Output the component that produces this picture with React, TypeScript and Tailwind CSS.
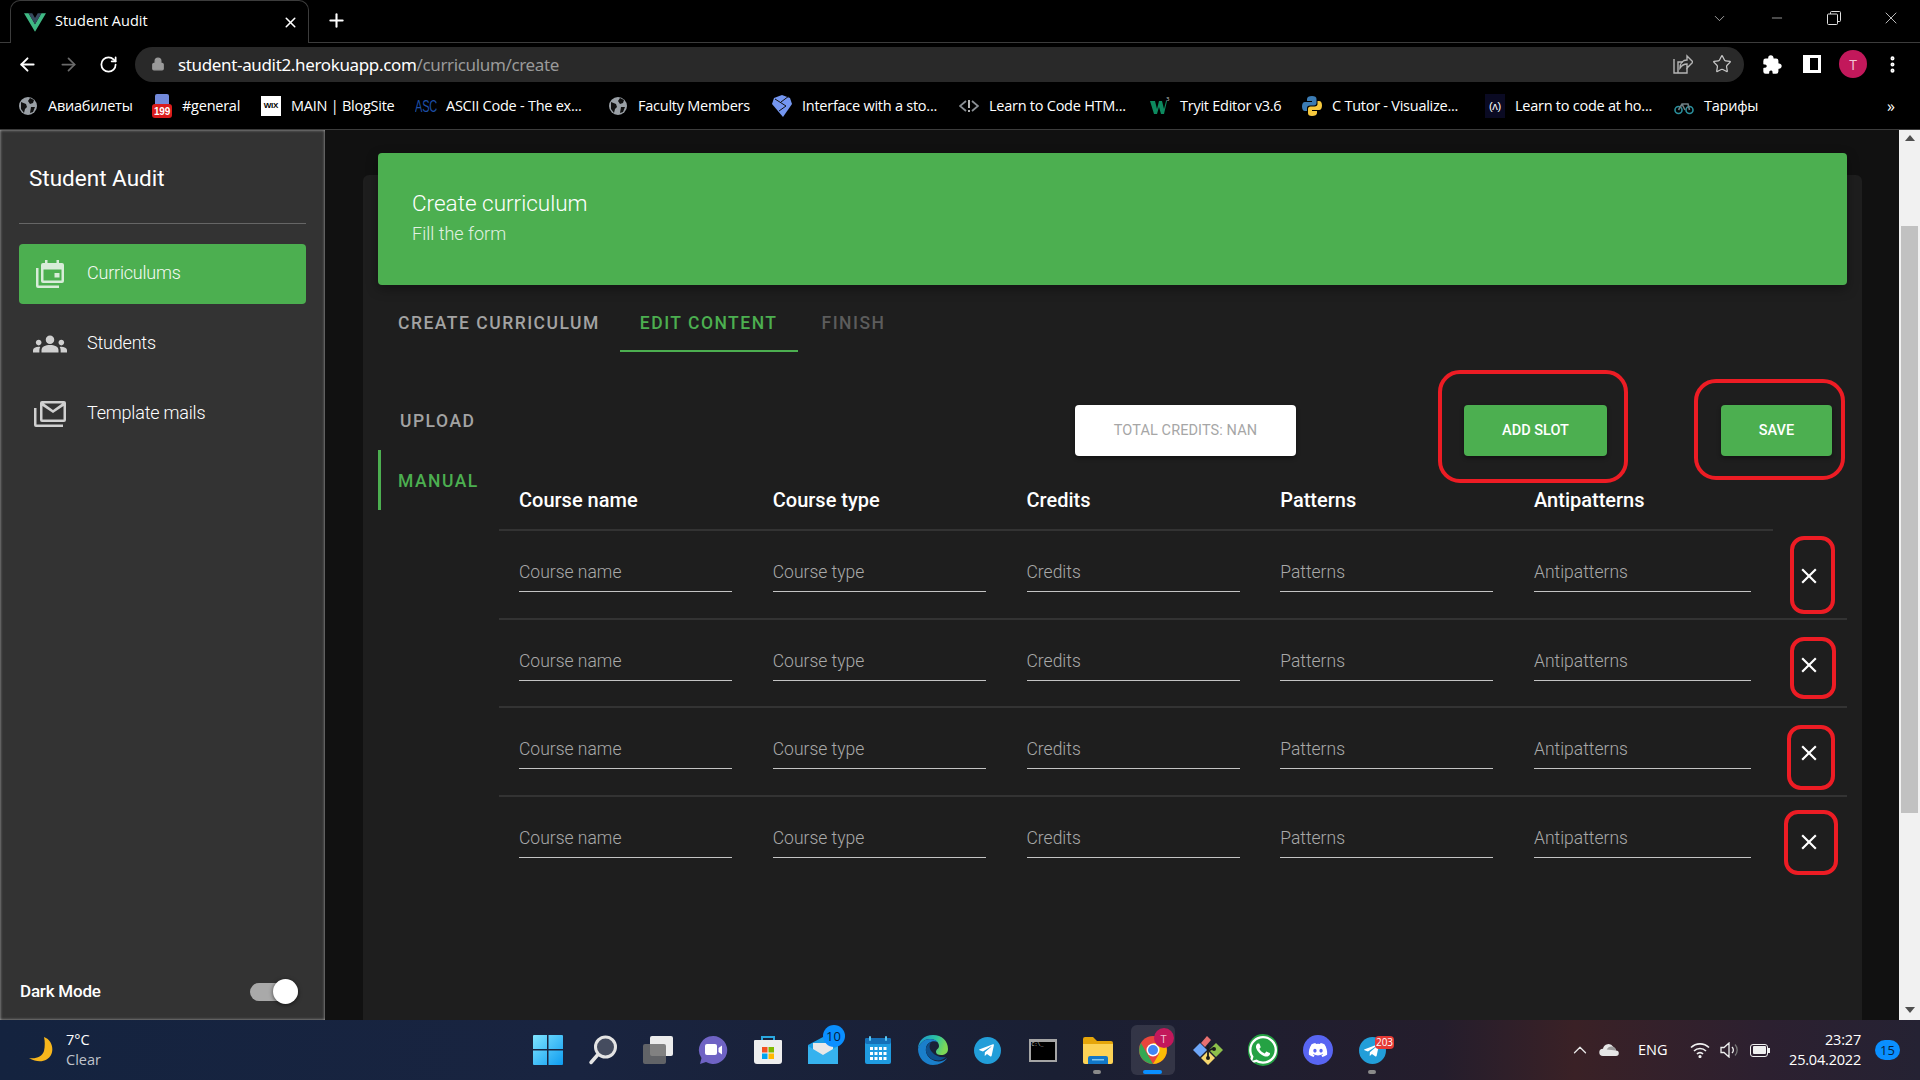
import React from "react";
import { ArrowLeft, ArrowRight, ChevronDown, ChevronUp, Lock, Minus, MoreVertical, Plus, RotateCw, Star, X } from "lucide-react";
import { FaDiscord, FaTelegramPlane, FaWhatsapp } from "react-icons/fa";
import { IoExtensionPuzzle } from "react-icons/io5";
import { MdClose, MdGroups } from "react-icons/md";

const Globe = () => (
  <svg viewBox="0 0 20 20" className="w-[20px] h-[20px]">
    <circle cx="10" cy="10" r="9" fill="#9aa0a6" />
    <path d="M3 6l5 2 1 3-2 2-1 4-3-4zM12 2l4 2-1 3-3 1-2-3zM13 11l4 0-2 5-3 1z" fill="#111" />
  </svg>
);

const bookmarks = [
  { label: "Авиабилеты", width: "w-[83px]", icon: <Globe /> },
  {
    label: "#general",
    width: "w-[58px]",
    icon: (
      <svg viewBox="0 0 20 24" className="w-[20px] h-[24px]">
        <rect x="3" y="0" width="14" height="12" rx="2" fill="#7289da" />
        <rect x="0" y="10" width="20" height="14" rx="3" fill="#d91c1c" />
        <text x="10" y="21" textAnchor="middle" fontSize="10" fontWeight="700" fill="#fff" fontFamily="Liberation Sans">199</text>
      </svg>
    ),
  },
  {
    label: "MAIN | BlogSite",
    width: "w-[104px]",
    icon: (
      <div className="w-[20px] h-[20px] bg-white flex items-center justify-center text-black text-[8px] font-bold font-['Liberation_Sans',sans-serif]">WIX</div>
    ),
  },
  {
    label: "ASCII Code - The ex...",
    width: "w-[141px]",
    icon: <div className="w-[20px] h-[20px] flex items-center justify-center text-[#1d4fa8] text-[11px] font-['Liberation_Sans',sans-serif] scale-y-150">ASC</div>,
  },
  { label: "Faculty Members", width: "w-[113px]", icon: <Globe /> },
  {
    label: "Interface with a sto...",
    width: "w-[136px]",
    icon: (
      <svg viewBox="0 0 20 24" className="w-[20px] h-[24px]">
        <path d="M2 4 10 1l8 3 2 6-9 13L0 10z" fill="#7496f0" />
        <path d="M3 5l11 7-7 5M9 8l8-6" stroke="#111" strokeWidth="1" fill="none" />
      </svg>
    ),
  },
  {
    label: "Learn to Code HTM...",
    width: "w-[140px]",
    icon: (
      <svg viewBox="0 0 20 20" className="w-[20px] h-[20px]" fill="none" stroke="#8a8f94" strokeWidth="1.8">
        <path d="M7 5 1 10l6 5M13 5l6 5-6 5" />
        <path d="M10 4v8M10 14v2" stroke="#c8c8c8" />
      </svg>
    ),
  },
  {
    label: "Tryit Editor v3.6",
    width: "w-[101px]",
    icon: (
      <svg viewBox="0 0 20 20" className="w-[20px] h-[20px]">
        <path d="M0 5h5l2 8 2-8h3l2 8 2-8h1l-3 13h-3l-2-7-2 7H4z" fill="#0d8a5f" />
        <text x="16" y="5" fontSize="6" fill="#ccc">3</text>
      </svg>
    ),
  },
  {
    label: "C Tutor - Visualize...",
    width: "w-[132px]",
    icon: (
      <svg viewBox="0 0 20 20" className="w-[20px] h-[20px]">
        <path d="M10 0c-3 0-5 1-5 3v2h5v1H3C1 6 0 8 0 10.500S1 15 3 15h2v-3c0-1.500 1-2.500 3-2.500h4c1.500 0 2.500-1 2.500-2.500V3C14.500 1 13 0 10 0z" fill="#3b7bb3" />
        <path d="M10 20c3 0 5-1 5-3v-2h-5v-1h7c2 0 3-2 3-4.500S19 5 17 5h-1.500v3c0 1.500-1 2.500-3 2.500h-4C7 10.500 6 11.500 6 13v4c0 2 1 3 4 3z" fill="#f7c93e" />
      </svg>
    ),
  },
  {
    label: "Learn to code at ho...",
    width: "w-[138px]",
    icon: (
      <div className="w-[20px] h-[24px] bg-[#0a0a23] flex items-center justify-center text-white text-[11px] font-['Liberation_Sans',sans-serif]">(ʌ)</div>
    ),
  },
  {
    label: "Тарифы",
    width: "w-[55px]",
    icon: (
      <svg viewBox="0 0 20 20" className="w-[20px] h-[20px]" fill="none" stroke="#2a8f9c" strokeWidth="1.6">
        <circle cx="4.500" cy="14" r="3.500" />
        <circle cx="15.500" cy="14" r="3.500" />
        <path d="M4.500 14 8 8h6l1.500 6M8 8l3 6" stroke="#6f7f84" />
      </svg>
    ),
  },
];

function ChromeBar() {
  return (
    <div className="bg-black text-white font-['Open_Sans',sans-serif]">
      {/* tab strip */}
      <div className="h-[43px] flex items-end border-b border-[#3c3c3c]">
        <div className="relative w-[299px] h-[43px] ml-[10px] -mb-px bg-black border border-b-0 border-[#3c3c3c] rounded-t-[10px] flex items-center pl-[13px]">
          <svg viewBox="0 0 24 20" className="w-[22px] h-[19px]">
            <path d="M0 0h5l7 12L19 0h5L12 20z" fill="#3fb984" />
            <path d="M5 0h4l3 5 3-5h4l-7 12z" fill="#35495e" />
          </svg>
          <span className="ml-[9px] -mt-[1px] text-[14.500px] leading-none">Student Audit</span>
          <X size={17} strokeWidth={2.2} className="ml-[134px]" />
        </div>
        <Plus size={21} strokeWidth={2.4} className="ml-[17px] mb-[11px]" />
        <div className="flex-1" />
        <div className="flex items-center h-[36px] mb-[6px] text-[#e0e0e0]">
          <ChevronDown size={17} strokeWidth={1} className="mr-[41px]" />
          <Minus size={16} strokeWidth={1} className="mr-[42px]" />
          <svg viewBox="0 0 14 14" className="w-[14px] h-[14px] mr-[40px]" fill="none" stroke="#e0e0e0" strokeWidth="1">
            <rect x="0.500" y="3" width="10" height="10.500" rx="1" />
            <path d="M3.500 3V1.500a1 1 0 0 1 1-1h8a1 1 0 0 1 1 1v8a1 1 0 0 1-1 1H10.500" />
          </svg>
          <X size={20} strokeWidth={1} className="mr-[19px]" />
        </div>
      </div>
      {/* address bar */}
      <div className="h-[42px] flex items-center pl-[17px]">
        <ArrowLeft size={21} strokeWidth={2.2} />
        <ArrowRight size={21} strokeWidth={2} className="ml-[20px] text-[#6a6a6a]" />
        <RotateCw size={19} strokeWidth={2.2} className="ml-[20px]" />
        <div className="ml-[17px] w-[1609px] h-[35px] bg-[#292929] rounded-full flex items-center pl-[16px]">
          <Lock size={14} className="text-[#9a9a9a] fill-[#9a9a9a]" />
          <span className="ml-[13px] text-[17px] leading-none tracking-[-0.35px] font-['Noto_Sans',sans-serif]">
            student-audit2.herokuapp.com<span className="text-[#9a9a9a]">/curriculum/create</span>
          </span>
          <div className="flex-1" />
          <svg viewBox="0 0 20 20" className="w-[20px] h-[20px]" fill="none" stroke="#b5b5b5" strokeWidth="1.4">
            <path d="M5 19V8h5M1 19h0M1 5v14h13v-5" />
            <path d="M7 14c0-5 3-8 7-8V2l6 6-6 6v-4c-3 0-5 1-7 4z" />
          </svg>
          <Star size={20} strokeWidth={1.5} className="ml-[19px] mr-[12px] text-[#c8c8c8]" />
        </div>
        <IoExtensionPuzzle size={21} className="ml-[18px]" />
        <div className="ml-[20px] w-[18px] h-[18px] border-[3px] border-white border-l-[7px]" />
        <div className="ml-[18px] w-[28px] h-[28px] rounded-full bg-[#c2185b] flex items-center justify-center text-[14px] text-[#f3c6d8]">T</div>
        <MoreVertical size={21} strokeWidth={2.6} className="ml-[15px]" />
      </div>
      {/* bookmarks */}
      <div className="h-[45px] pb-[2px] flex items-center pl-[18px] gap-[21px] border-b border-[#3c3c3c] text-[14.500px] tracking-[-0.25px]">
        {bookmarks.map((b) => (
          <div key={b.label} className="flex items-center gap-[10px]">
            <div className="w-[20px] flex justify-center">{b.icon}</div>
            <span className={`${b.width} whitespace-nowrap leading-none`}>{b.label}</span>
          </div>
        ))}
        <span className="absolute left-[1887px] text-[16px]">»</span>
      </div>
    </div>
  );
}

function Sidebar() {
  return (
    <div className="w-[325px] shrink-0 bg-[#333333] shadow-[inset_0_0_3px_#b5b5b5] flex flex-col text-white font-['Roboto',sans-serif] px-[19px]">
      <div className="h-[94px] border-b border-[#666666] pl-[10px] pt-[33px] text-[22.500px] leading-[30px] font-normal">Student Audit</div>
      <div className="mt-[20px] h-[60px] rounded-[4px] bg-[#4caf50] flex items-center pl-[17px]">
        <svg viewBox="0 0 28 28" className="w-[28px] h-[28px] text-[#d8ecd9]" fill="currentColor">
          <path d="M0 8h2.500v17.500H23V28H2a2 2 0 0 1-2-2z" />
          <path fillRule="evenodd" d="M8 3h1V0h2.500v3h9V0H23v3h3a2 2 0 0 1 2 2v16a2 2 0 0 1-2 2H7a2 2 0 0 1-2-2V5a2 2 0 0 1 2-2zM7.500 9.500v11h18v-11z" />
          <rect x="18.500" y="13" width="5" height="4.500" />
        </svg>
        <span className="ml-[23px] -mt-[3px] text-[18px] font-light tracking-[-0.2px] text-[#f4faf4]">Curriculums</span>
      </div>
      <div className="mt-[10px] h-[60px] flex items-center pl-[15px]">
        <MdGroups size={34} className="text-[#d0d0d0] -mx-[1px] -mt-[1px]" />
        <span className="ml-[21px] -mt-[4px] text-[18px] font-light tracking-[-0.2px]">Students</span>
      </div>
      <div className="mt-[10px] h-[60px] flex items-center pl-[15px]">
        <svg viewBox="0 0 32 26" className="w-[32px] h-[26px] -mt-[1px] text-[#d0d0d0]" fill="currentColor">
          <path d="M0 7h2.500v16.500H29V26H2a2 2 0 0 1-2-2z" />
          <path fillRule="evenodd" d="M8 0h22a2 2 0 0 1 2 2v17a2 2 0 0 1-2 2H8a2 2 0 0 1-2-2V2a2 2 0 0 1 2-2zm.500 5v13.500h21V5L19 12zM10 2.500 19 9l9-6.500z" />
        </svg>
        <span className="ml-[21px] -mt-[4px] text-[18px] font-light tracking-[-0.2px]">Template mails</span>
      </div>
      <div className="flex-1" />
      <div className="h-[56px] pb-[1px] flex items-center justify-between">
        <span className="ml-[1px] text-[17px] font-medium tracking-[-0.2px]">Dark Mode</span>
        <div className="relative w-[48px] h-[18px] mr-[8px] rounded-full bg-[#a9a9a9]">
          <div className="absolute right-0 -top-[3.5px] w-[25px] h-[25px] rounded-full bg-white shadow-[0_1px_4px_rgba(0,0,0,0.6)]" />
        </div>
      </div>
    </div>
  );
}

const columns = ["Course name", "Course type", "Credits", "Patterns", "Antipatterns"];
const rows = [0, 1, 2, 3];

function CourseRow({ last }: { last: boolean }) {
  return (
    <div className={`h-[88.700px] flex pl-[20px] ${last ? "" : "border-b-2 border-[#333333]"}`}>
      {columns.map((c, i) => (
        <div key={c} className={`${i === 4 ? "w-[217px]" : "w-[253.750px]"} shrink-0 pt-[22px]`}>
          <input
            placeholder={c}
            className={`${i === 4 ? "w-[217px]" : "w-[213px]"} h-[39px] border-b border-[#c4c4c4] bg-transparent outline-none text-[17.500px] font-light placeholder:text-[#a9a9a9]`}
          />
        </div>
      ))}
      <MdClose size={26} className="ml-[45px] mt-[32px] text-white" />
    </div>
  );
}

function Content() {
  return (
    <div className="flex-1 min-w-0 bg-[#111111] pl-[38px] pr-[37px] pt-[45px] flex flex-col font-['Roboto',sans-serif]">
      <div className="flex-1 bg-[#1e1e1e] rounded-t-[6px] px-[15px]">
        <div className="-mt-[22px] h-[132px] bg-[#4caf50] rounded-[4px] text-white pl-[34px] pt-[35px] shadow-[0_4px_12px_rgba(0,0,0,0.35)]">
          <div className="text-[22.500px] leading-[30px] font-light">Create curriculum</div>
          <div className="mt-[3px] text-[18px] leading-[26px] font-light text-[#e2f2e3]">Fill the form</div>
        </div>
        {/* stepper tabs */}
        <div className="mt-[7px] flex text-[17.500px] font-medium tracking-[1.500px] leading-none">
          <div className="h-[60px] px-[20px] pt-[4px] flex items-center text-[#a3a3a3]">CREATE CURRICULUM</div>
          <div className="relative h-[60px] px-[20px] pt-[4px] flex items-center text-[#4caf50]">
            EDIT CONTENT
            <div className="absolute left-0 right-0 bottom-0 h-[2px] bg-[#4caf50]" />
          </div>
          <div className="h-[60px] ml-[4px] px-[20px] pt-[4px] flex items-center text-[#5c5c5c]">FINISH</div>
        </div>
        <div className="mt-[38px] flex">
          <div className="w-[121px] shrink-0 text-[17.500px] font-medium tracking-[1.500px] leading-none">
            <div className="h-[60px] pl-[22px] pt-[3px] flex items-center text-[#a3a3a3]">UPLOAD</div>
            <div className="h-[60px] pl-[17px] pt-[3px] flex items-center text-[#4caf50] border-l-[3px] border-[#4caf50]">MANUAL</div>
          </div>
          <div className="flex-1 min-w-0 text-white">
            <div className="pt-[15px] h-[66px] flex text-[14.500px] font-normal">
              <div className="ml-[576px] w-[221px] h-[51px] rounded-[4px] bg-white flex items-center justify-center text-[#a6a6a6] tracking-[0.1px] shadow-[0_2px_4px_rgba(0,0,0,0.4)]">TOTAL CREDITS: NAN</div>
              <div className="ml-[168px] w-[143px] h-[51px] rounded-[4px] bg-[#4caf50] flex items-center justify-center font-medium shadow-[0_2px_4px_rgba(0,0,0,0.4)]">ADD SLOT</div>
              <div className="ml-[114px] w-[111px] h-[51px] rounded-[4px] bg-[#4caf50] flex items-center justify-center font-medium shadow-[0_2px_4px_rgba(0,0,0,0.4)]">SAVE</div>
            </div>
            <div className="w-[1274px] h-[75px] flex pl-[20px] pt-[29px] border-b-2 border-[#333333] text-[20px] font-medium leading-[30px]">
              {columns.map((c) => (
                <div key={c} className="w-[253.750px] shrink-0">{c}</div>
              ))}
            </div>
            {rows.map((r) => (
              <CourseRow key={r} last={r === rows.length - 1} />
            ))}
          </div>
        </div>
      </div>
    </div>
  );
}

function PageScrollbar() {
  return (
    <div className="w-[21px] shrink-0 bg-[#f1f1f1] flex flex-col items-center relative">
      <div className="mt-[5px] w-0 h-0 border-x-[5px] border-x-transparent border-b-[6px] border-b-[#505050]" />
      <div className="mt-[85px] w-[17px] h-[587px] bg-[#c1c1c1]" />
      <div className="flex-1" />
      <div className="mb-[7px] w-0 h-0 border-x-[5px] border-x-transparent border-t-[6px] border-t-[#505050]" />
    </div>
  );
}

function Badge({ text, className }: { text: string; className: string }) {
  return <div className={`absolute flex items-center justify-center leading-none ${className}`}>{text}</div>;
}

const taskIcons = [
  <svg key="win" viewBox="0 0 30 30" className="w-[30px] h-[30px]">
    <defs>
      <linearGradient id="win" x1="0" y1="0" x2="1" y2="1">
        <stop offset="0" stopColor="#7fe4ff" />
        <stop offset="1" stopColor="#0e9cf0" />
      </linearGradient>
    </defs>
    <path d="M1 0h13v14H0V1a1 1 0 0 1 1-1zM15.500 0H29a1 1 0 0 1 1 1v13H15.500zM0 15.500h14V30H1a1 1 0 0 1-1-1zM15.500 15.500H30V29a1 1 0 0 1-1 1H15.500z" fill="url(#win)" />
  </svg>,
  <svg key="search" viewBox="0 0 30 30" className="w-[30px] h-[30px]">
    <circle cx="17.500" cy="12" r="10" fill="#454c5f" stroke="#e4e4e4" strokeWidth="3" />
    <path d="M9.500 20 3 27.500" stroke="#e4e4e4" strokeWidth="3.500" strokeLinecap="round" />
  </svg>,
  <div key="view" className="relative w-[30px] h-[28px]">
    <div className="absolute right-0 top-0 w-[23px] h-[20px] rounded-[2px] bg-[#ececec]" />
    <div className="absolute left-0 bottom-0 w-[23px] h-[20px] rounded-[2px] bg-[#6e6e6e]/85" />
  </div>,
  <svg key="chat" viewBox="0 0 30 30" className="w-[30px] h-[30px]">
    <path d="M15 1a14 14 0 1 1-7 26l-6 2 1.500-6A14 14 0 0 1 15 1z" fill="#6f63c4" />
    <rect x="7" y="9" width="12" height="11" rx="2" fill="#fff" />
    <path d="m20.500 13 3.500-2.500v9L20.500 17z" fill="#fff" />
  </svg>,
  <svg key="store" viewBox="0 0 30 30" className="w-[30px] h-[30px]">
    <path d="M9 6V2h12v4" fill="none" stroke="#2aa8e0" strokeWidth="2" />
    <path d="M2 5h26a1 1 0 0 1 1 1v20a3 3 0 0 1-3 3H4a3 3 0 0 1-3-3V6a1 1 0 0 1 1-1z" fill="#eeeeee" />
    <rect x="9" y="12" width="5.500" height="5.500" fill="#f25022" />
    <rect x="15.500" y="12" width="5.500" height="5.500" fill="#7fba00" />
    <rect x="9" y="18.500" width="5.500" height="5.500" fill="#00a4ef" />
    <rect x="15.500" y="18.500" width="5.500" height="5.500" fill="#ffb900" />
  </svg>,
  <div key="mail" className="relative w-[30px] h-[30px]">
    <svg viewBox="0 0 30 30" className="w-[30px] h-[30px]">
      <path d="M0 10 15 2l15 8v19H0z" fill="#1b9de2" />
      <path d="M5 8h20v12l-10 4-10-8z" fill="#e8e8e8" />
      <path d="M0 11v18h30V11L15 20z" fill="#36b2ee" />
    </svg>
    <Badge text="10" className="-top-[10px] left-[15px] w-[22px] h-[22px] rounded-full bg-[#0a8fff] text-[#06203c] text-[13px]" />
  </div>,
  <svg key="cal" viewBox="0 0 26 28" className="w-[26px] h-[28px]">
    <rect x="0" y="2" width="26" height="26" rx="2" fill="#1f9be0" />
    <rect x="0" y="2" width="26" height="6" rx="2" fill="#1570b8" />
    <rect x="4" y="0" width="2" height="5" rx="1" fill="#5ac8f5" />
    <rect x="20" y="0" width="2" height="5" rx="1" fill="#5ac8f5" />
    {[11, 16, 21].map((y) => [5, 9.500, 14, 18.500].map((x) => <rect key={`${x}-${y}`} x={x} y={y} width="3" height="3" fill="#fff" />))}
  </svg>,
  <svg key="edge" viewBox="0 0 30 30" className="w-[30px] h-[30px]">
    <defs>
      <linearGradient id="edge" x1="0" y1="0" x2="1" y2="0.3">
        <stop offset="0" stopColor="#1b8fd8" />
        <stop offset="0.6" stopColor="#2cc3a0" />
        <stop offset="1" stopColor="#7dd856" />
      </linearGradient>
    </defs>
    <path d="M15 0c9 0 15 6 15 14 0 4-3 6-7 6-3 0-5-1-5-3 0-3 3-3 3-6 0-4-4-7-9-7C6 4 1 9 0 14 0 6 6 0 15 0z" fill="url(#edge)" />
    <path d="M0 14c1-5 6-10 12-10 3 0 6 1 8 3-5-2-11 0-12 6-1 6 3 11 9 13 5 1 9 0 12-3-2 4-8 7-14 7C7 30 0 23 0 14z" fill="#1a7fcb" />
    <path d="M28 22c-3 3-7 4-11 3-6-1-10-7-9-12 1-3 3-5 5-6-2 3-2 7 1 10 3 4 9 6 14 5z" fill="#0e4f8c" />
  </svg>,
  <div key="tg" className="w-[27px] h-[27px] rounded-full bg-[#229ed9] flex items-center justify-center">
    <FaTelegramPlane size={17} className="text-white -ml-[2px]" />
  </div>,
  <div key="term" className="w-[28px] h-[23px] bg-black border-2 border-[#a5a5a5] border-t-[3px] flex items-start pl-[1px] text-[5px] leading-[7px] text-[#cccccc] font-['Liberation_Mono',monospace]">C:\_</div>,
  <svg key="files" viewBox="0 0 30 27" className="w-[30px] h-[27px]">
    <path d="M0 2a2 2 0 0 1 2-2h8l4 4h14a2 2 0 0 1 2 2v5H0z" fill="#e5a50a" />
    <path d="M0 7h30v18a2 2 0 0 1-2 2H2a2 2 0 0 1-2-2z" fill="#fcd256" />
    <path d="M5 21a2 2 0 0 1 2-2h16a2 2 0 0 1 2 2v6H5z" fill="#1177c7" />
    <rect x="9" y="22" width="12" height="1.500" fill="#7ec6f0" />
  </svg>,
  <div key="chrome" className="relative w-[28px] h-[28px]">
    <svg viewBox="0 0 28 28" className="w-[28px] h-[28px]">
      <circle cx="14" cy="14" r="14" fill="#e8453c" />
      <path d="M14 28A14 14 0 0 1 2 7l8 14z" fill="#34a853" />
      <path d="M14 28a14 14 0 0 0 12-21H14l6 11z" fill="#fbbc05" />
      <circle cx="14" cy="14" r="6.500" fill="#fff" />
      <circle cx="14" cy="14" r="5" fill="#4285f4" />
    </svg>
    <Badge text="T" className="-top-[8px] left-[15px] w-[20px] h-[20px] rounded-full bg-[#c2185b] text-[#f0c0d4] text-[11px]" />
  </div>,
  <svg key="git" viewBox="0 0 30 30" className="w-[30px] h-[30px]">
    <path d="M8 8 14 1l4 4-6 7z" fill="#e87070" />
    <path d="M0 15 7 8l7 7-7 7z" fill="#6ea6f8" />
    <path d="M16 15l7-7 7 7-7 7z" fill="#8dc04a" />
    <path d="M8 23l7-7 7 7-7 7z" fill="#f5d76e" />
    <path d="M15 10v14M15 16l6-3" stroke="#1a1a1a" strokeWidth="1.800" fill="none" />
    <circle cx="15" cy="23" r="2" fill="#1a1a1a" />
    <circle cx="21" cy="14" r="2" fill="#1a1a1a" />
  </svg>,
  <div key="wa" className="relative w-[30px] h-[30px] flex items-center justify-center">
    <FaWhatsapp size={32} className="text-white bg-[#25a244] rounded-full" />
  </div>,
  <div key="dc" className="w-[30px] h-[30px] rounded-full bg-[#5865f2] flex items-center justify-center">
    <FaDiscord size={20} className="text-white" />
  </div>,
  <div key="tg2" className="relative w-[27px] h-[27px] rounded-full bg-[#229ed9] flex items-center justify-center">
    <FaTelegramPlane size={17} className="text-white -ml-[2px]" />
    <Badge text="203" className="-top-[1px] left-[16px] w-[19px] h-[13px] rounded-[4px] bg-[#e53935] text-white text-[10px]" />
  </div>,
];

function Taskbar() {
  return (
    <div className="h-[60px] shrink-0 flex items-center text-white bg-[linear-gradient(90deg,#14233f_0%,#192440_30%,#1a1f33_55%,#241d2c_75%,#3a2126_82%,#2c2030_92%,#252233_100%)] font-['Open_Sans',sans-serif]">
      <div className="w-[520px] shrink-0 flex items-center pl-[29px]">
        <svg viewBox="0 0 24 26" className="w-[24px] h-[26px]">
          <path d="M15 0c8 3 10 12 7 18-3 6-12 9-22 3 7 1 13-1 15-7 1-5 1-10 0-14z" fill="#f8b71c" />
        </svg>
        <div className="ml-[13px] text-[14.500px] leading-[20px]">
          <div>7°C</div>
          <div className="text-[#c0c4cc]">Clear</div>
        </div>
      </div>
      <div className="flex items-center">
        {taskIcons.map((icon, i) => (
          <div key={i} className="relative w-[55px] h-[60px] flex items-center justify-center">
            {i === 11 && (
              <div className="absolute left-[6px] top-[5px] w-[44px] h-[50px] rounded-[6px] bg-white/10" />
            )}
            <div className="relative">{icon}</div>
            {i === 11 && <div className="absolute left-[18px] bottom-[6px] w-[19px] h-[4px] rounded-full bg-[#0a8fff]" />}
            {(i === 10 || i === 15) && <div className="absolute left-[23px] bottom-[6px] w-[8px] h-[4px] rounded-full bg-[#8a8a8a]" />}
          </div>
        ))}
      </div>
      <div className="flex items-center flex-1 min-w-0 text-[14.500px]">
        <ChevronUp size={22} strokeWidth={1.4} className="ml-[169px] text-[#e8e8e8]" />
        <svg viewBox="0 0 22 14" className="ml-[8px] w-[21px] h-[13px]">
          <path d="M4 13a4 4 0 0 1 0-8 6 6 0 0 1 11-2 5 5 0 0 1 3 4 3 3 0 0 1 0 6z" fill="#e6e6e6" />
          <path d="M8 6a6 6 0 0 1 7-3 5 5 0 0 1 3 4z" fill="#9a9a9a" />
        </svg>
        <span className="ml-[18px] w-[30px]">ENG</span>
        <svg viewBox="0 0 20 16" className="ml-[22px] w-[20px] h-[16px]" fill="none" stroke="#f0f0f0" strokeWidth="1.600">
          <path d="M1 5.500a13 13 0 0 1 18 0M4 9a8.500 8.500 0 0 1 12 0M7 12a4 4 0 0 1 6 0" />
          <circle cx="10" cy="14.500" r="0.800" fill="#f0f0f0" />
        </svg>
        <svg viewBox="0 0 18 16" className="ml-[10px] w-[18px] h-[16px]" fill="none" stroke="#f0f0f0" strokeWidth="1.300">
          <path d="M1 5.500h3L9 1v14l-5-4.500H1zM12 5a4 4 0 0 1 0 6" />
          <path d="M15 2.500a8 8 0 0 1 0 11" stroke="#777" />
        </svg>
        <div className="ml-[12px] flex items-center">
          <div className="w-[18px] h-[13px] rounded-[3px] border-[1.500px] border-[#f0f0f0] p-[1.500px]">
            <div className="w-full h-full bg-[#f0f0f0] rounded-[1px]" />
          </div>
          <div className="w-[2px] h-[5px] bg-[#f0f0f0]" />
        </div>
        <div className="ml-[20px] w-[71px] text-right text-[14.500px] leading-[20px] tracking-[-0.2px] whitespace-nowrap flex flex-col items-end">
          <div>23:27</div>
          <div>25.04.2022</div>
        </div>
        <div className="ml-[14px] w-[25px] h-[20px] rounded-full bg-[#0a8fff] text-[#06203c] text-[13px] flex items-center justify-center leading-none">15</div>
      </div>
    </div>
  );
}

function RedMark({ className }: { className: string }) {
  return <div className={`absolute border-[4px] border-[#ed1c24] rounded-[14px] pointer-events-none ${className}`} />;
}

export default function App() {
  return (
    <div className="relative w-[1920px] h-[1080px] overflow-hidden flex flex-col bg-black">
      <ChromeBar />
      <div className="flex-1 min-h-0 flex">
        <Sidebar />
        <Content />
        <PageScrollbar />
      </div>
      <Taskbar />
      {/* hand-drawn annotations on the screenshot */}
      <RedMark className="left-[1438px] top-[370px] w-[190px] h-[113px] rounded-[22px]" />
      <RedMark className="left-[1694px] top-[379px] w-[151px] h-[101px] rounded-[22px]" />
      <RedMark className="left-[1790px] top-[536px] w-[45px] h-[78px]" />
      <RedMark className="left-[1790px] top-[637px] w-[46px] h-[62px]" />
      <RedMark className="left-[1787px] top-[725px] w-[48px] h-[65px]" />
      <RedMark className="left-[1784px] top-[810px] w-[54px] h-[65px]" />
    </div>
  );
}
